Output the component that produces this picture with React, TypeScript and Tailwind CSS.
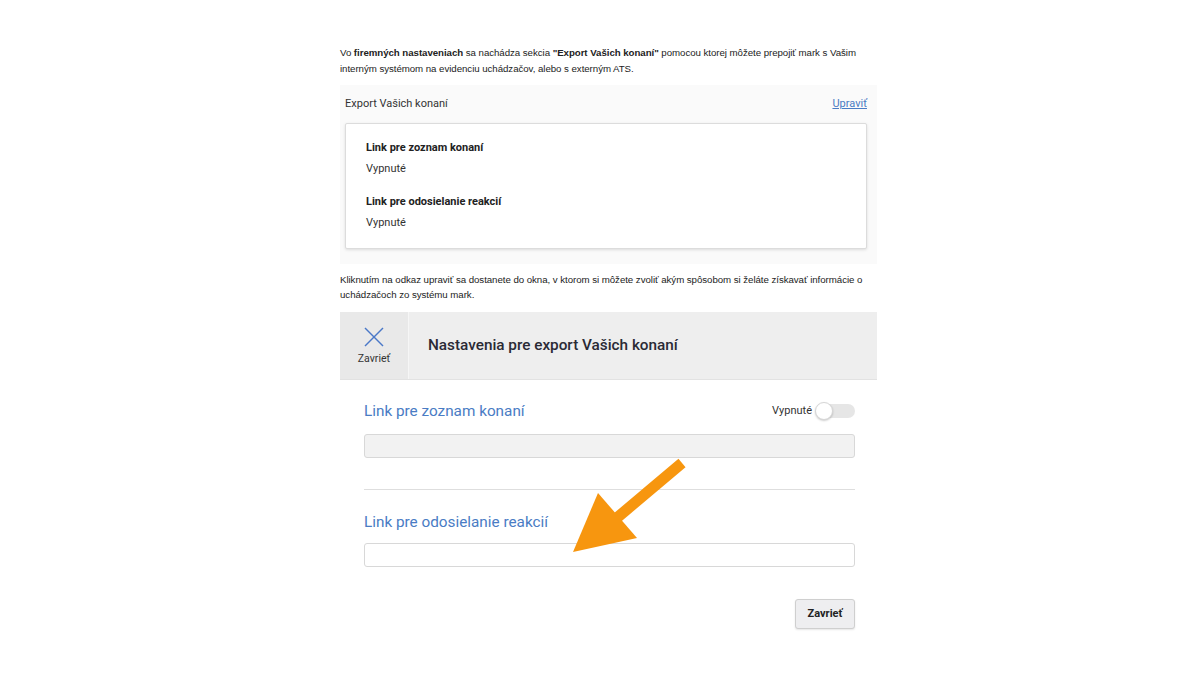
import React from "react";

const Toggle = () => (
    <div className="relative h-[14px] w-[39px] rounded-full bg-[#e6e6e6]">
        <div className="absolute -left-[1px] -top-[2px] h-[18px] w-[18px] rounded-full border border-[#d6d6d6] bg-white shadow-[0_1px_2px_rgba(0,0,0,0.2)]" />
    </div>
);

const App = () => {
    return (
        <div className="relative h-[675px] w-[1200px] bg-white">
            <div className="ml-[340px] w-[537px] pt-[45px]">
                {/* intro text */}
                <p className="font-['Liberation_Sans',Arial,sans-serif] text-[9.7px] leading-[16px] tracking-[-0.05px] text-[#222]">
                    Vo <b>firemných nastaveniach</b> sa nachádza sekcia <b>"Export Vašich konaní"</b> pomocou ktorej môžete prepojiť mark s Vašim interným systémom na evidenciu uchádzačov, alebo s externým ATS.
                </p>

                {/* export summary box */}
                <div className="mt-[8px] bg-[#fafafa] pb-[15px] pl-[5px] pr-[10px] pt-[11px] font-['Roboto',sans-serif]">
                    <div className="flex h-[16px] items-center justify-between text-[11px] text-[#333]">
                        <span>Export Vašich konaní</span>
                        <a href="#" className="text-[#4a7cc4] underline">Upraviť</a>
                    </div>
                    <div className="mt-[11px] rounded-[2px] border border-[#dcdcdc] bg-white pb-[17px] pl-[20px] pt-[16px] text-[11px] leading-[16px] text-[#333] shadow-[0_1px_3px_rgba(0,0,0,0.12)]">
                        <div className="font-bold text-[#222]">Link pre zoznam konaní</div>
                        <div className="mt-[5px]">Vypnuté</div>
                        <div className="mt-[17px] font-bold text-[#222]">Link pre odosielanie reakcií</div>
                        <div className="mt-[5px]">Vypnuté</div>
                    </div>
                </div>

                <p className="mt-[8px] font-['Liberation_Sans',Arial,sans-serif] text-[9.7px] leading-[15px] tracking-[-0.05px] text-[#222]">
                    Kliknutím na odkaz upraviť sa dostanete do okna, v ktorom si môžete zvoliť akým spôsobom si želáte získavať informácie o uchádzačoch zo systému mark.
                </p>

                {/* modal */}
                <div className="mt-[10px] font-['Roboto',sans-serif]">
                    <div className="flex h-[68px] border-b border-[#e2e2e2] bg-[#eeeeee]">
                        <div className="flex w-[69px] flex-col items-center justify-center border-r border-[#f6f6f6] bg-[#e9e9e9] pt-[2px]">
                            <svg width="22" height="22" viewBox="0 0 22 22" fill="none" stroke="#4a78c8" strokeWidth="1.5">
                                <line x1="2" y1="2" x2="20" y2="20" />
                                <line x1="20" y1="2" x2="2" y2="20" />
                            </svg>
                            <span className="mt-[3px] text-[10.5px] text-[#333]">Zavrieť</span>
                        </div>
                        <div className="flex items-center pl-[19px] text-[15.3px] font-medium text-[#2a2a35]">
                            Nastavenia pre export Vašich konaní
                        </div>
                    </div>

                    <div className="pl-[24px] pr-[22px] pt-[19px]">
                        <div className="flex h-[24px] items-center justify-between">
                            <span className="text-[15.3px] text-[#4a7cc4]">Link pre zoznam konaní</span>
                            <div className="flex items-center gap-[4px]">
                                <span className="text-[11px] text-[#333]">Vypnuté</span>
                                <Toggle />
                            </div>
                        </div>
                        <div className="mt-[11px] h-[24px] rounded-[3px] border border-[#d8d8d8] bg-[#f2f2f2]" />
                        <div className="mt-[31px] border-t border-[#dedede]" />
                        <div className="mt-[20px] flex h-[24px] items-center">
                            <span className="text-[15.3px] text-[#4a7cc4]">Link pre odosielanie reakcií</span>
                        </div>
                        <div className="mt-[9px] h-[24px] rounded-[3px] border border-[#d8d8d8] bg-white" />
                        <div className="mt-[32px] flex justify-end">
                            <button className="h-[30px] w-[60px] rounded-[3px] border border-[#cfcfcf] bg-[#eeeef0] text-[11px] font-bold text-[#222] shadow-[0_1px_2px_rgba(0,0,0,0.1)]">
                                Zavrieť
                            </button>
                        </div>
                    </div>
                </div>
            </div>

            {/* orange arrow pointing at the second field */}
            <svg className="absolute left-0 top-0" width="1200" height="675" viewBox="0 0 1200 675">
                <line x1="682" y1="463" x2="612" y2="522" stroke="#f7960f" strokeWidth="11" />
                <polygon points="598,493 637,538 573,552" fill="#f7960f" />
            </svg>
        </div>
    );
};

export default App;
